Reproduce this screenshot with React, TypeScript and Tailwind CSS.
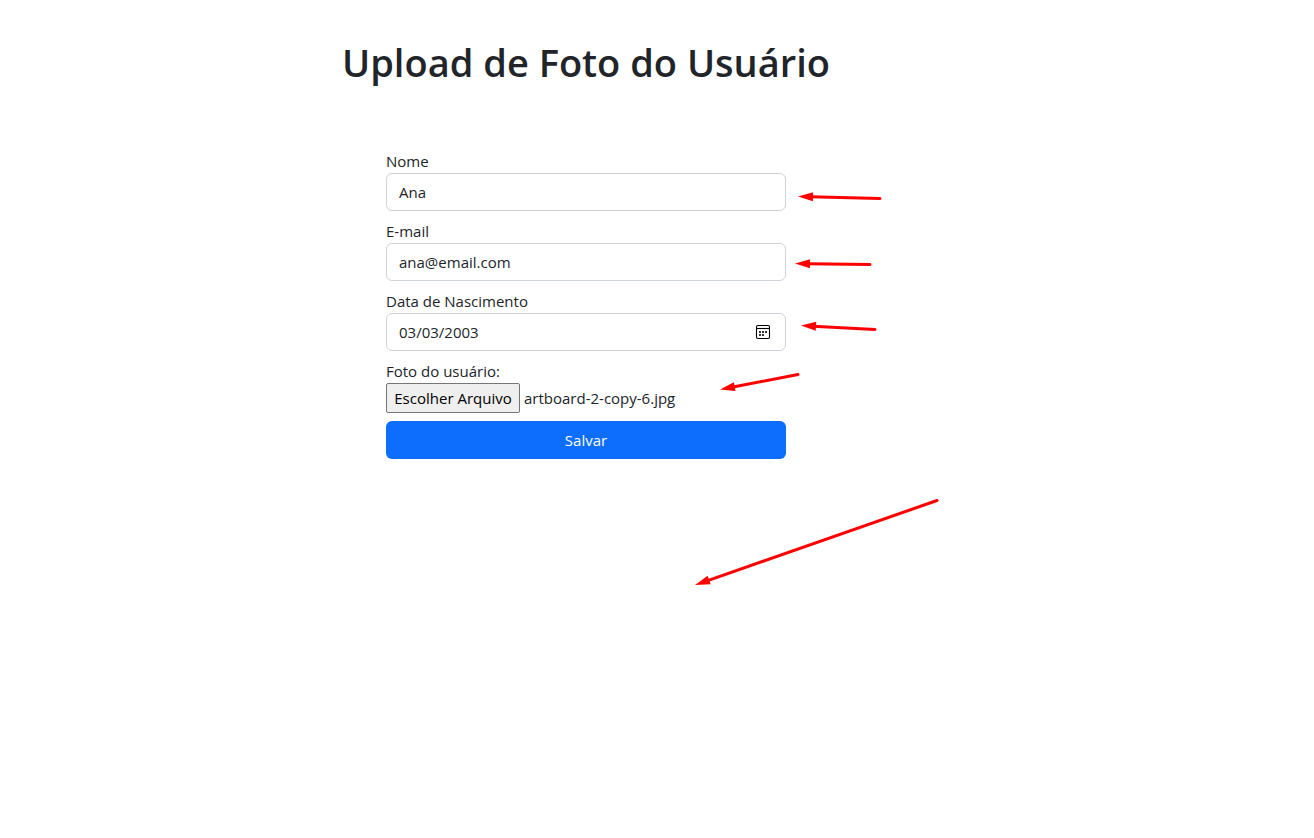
import { useRef, useState } from "react";
import type { InputHTMLAttributes } from "react";

type FieldProps = InputHTMLAttributes<HTMLInputElement> & { id: string; label: string };

function CalendarIcon() {
  return (
    <svg
      className="pointer-events-none absolute top-[11px] right-[15px] size-4"
      viewBox="0 0 16 16"
      fill="none"
      aria-hidden="true"
    >
      <rect x="1.5" y="1.5" width="13" height="13" rx="1.5" stroke="#000000" strokeWidth="1.1" />
      <path d="M1.5 4.5H14.5" stroke="#000000" strokeWidth="1.1" />
      <path
        d="M7 7h2v2H7zM10 7h2v2h-2zM4 10h2v2H4zM7 10h2v2H7zM4 7h2v2H4z"
        fill="#333333"
      />
    </svg>
  );
}

function Field({ id, label, ...props }: FieldProps) {
  return (
    <div className="flex flex-col">
      <label htmlFor={id} className="self-start">
        {label}
      </label>
      <div className="relative flex">
        <input
          id={id}
          name={id}
          className="h-[38px] w-full rounded-md border border-[#ced4da] bg-white px-3 text-[#212529] focus:outline-2 focus:outline-[#86b7fe] [&::-webkit-calendar-picker-indicator]:opacity-0 [&::-webkit-datetime-edit-day-field]:p-0 [&::-webkit-datetime-edit-month-field]:p-0 [&::-webkit-datetime-edit-year-field]:p-0"
          {...props}
        />
        {props.type === "date" && <CalendarIcon />}
      </div>
    </div>
  );
}

type ArrowProps = { from: [number, number]; to: [number, number] };

function Arrow({ from, to }: ArrowProps) {
  const dx = from[0] - to[0];
  const dy = from[1] - to[1];
  const length = Math.hypot(dx, dy);
  const angle = (Math.atan2(dy, dx) * 180) / Math.PI;
  return (
    <g transform={`translate(${to[0]} ${to[1]}) rotate(${angle})`}>
      <path d={`M12 0H${length}`} stroke="#ff0000" strokeWidth="3" strokeLinecap="round" />
      <path d="M0 0L15 -4.5V4.5Z" fill="#ff0000" />
    </g>
  );
}

const arrows: ArrowProps[] = [
  { from: [494, 49.5], to: [412, 47.5] },
  { from: [484, 115.5], to: [409, 114.5] },
  { from: [489, 180.5], to: [415, 176.5] },
  { from: [412, 225.5], to: [334, 240.5] },
  { from: [551, 351.5], to: [309, 436] },
];

export default function App() {
  const fileInput = useRef<HTMLInputElement>(null);
  const [fileName, setFileName] = useState("artboard-2-copy-6.jpg");

  return (
    <main className="flex min-h-screen flex-col items-center bg-white pt-[38px] pr-[142px] font-['Open_Sans','Noto_Sans',sans-serif] text-[15px] leading-6 text-[#212529]">
      <h1 className="text-[38px] leading-12 font-semibold">Upload de Foto do Usuário</h1>
      <div className="relative mt-[63px] w-full max-w-[400px]">
        <form className="flex flex-col gap-2" onSubmit={(event) => event.preventDefault()}>
          <Field id="nome" label="Nome" type="text" defaultValue="Ana" />
          <Field id="email" label="E-mail" type="email" defaultValue="ana@email.com" />
          <Field id="nascimento" label="Data de Nascimento" type="date" defaultValue="2003-03-03" />
          <div className="flex flex-col">
            <label htmlFor="foto" className="self-start">
              Foto do usuário:
            </label>
            <div className="flex items-center gap-1">
              <button
                type="button"
                onClick={() => fileInput.current?.click()}
                className="h-[30px] w-[134px] rounded-xs border border-[#767676] bg-[#efefef] text-center whitespace-nowrap text-black"
              >
                Escolher Arquivo
              </button>
              <span>{fileName}</span>
              <input
                ref={fileInput}
                id="foto"
                name="foto"
                type="file"
                accept="image/*"
                className="hidden"
                onChange={(event) => setFileName(event.target.files?.[0]?.name ?? "")}
              />
            </div>
          </div>
          <button type="submit" className="h-[38px] rounded-md bg-[#0d6efd] text-center text-white">
            Salvar
          </button>
        </form>
        <svg
          className="pointer-events-none absolute top-0 left-0 h-[450px] w-[560px]"
          viewBox="0 0 560 450"
          fill="none"
          aria-hidden="true"
        >
          {arrows.map((arrow) => (
            <Arrow key={arrow.to.join()} {...arrow} />
          ))}
        </svg>
      </div>
    </main>
  );
}
